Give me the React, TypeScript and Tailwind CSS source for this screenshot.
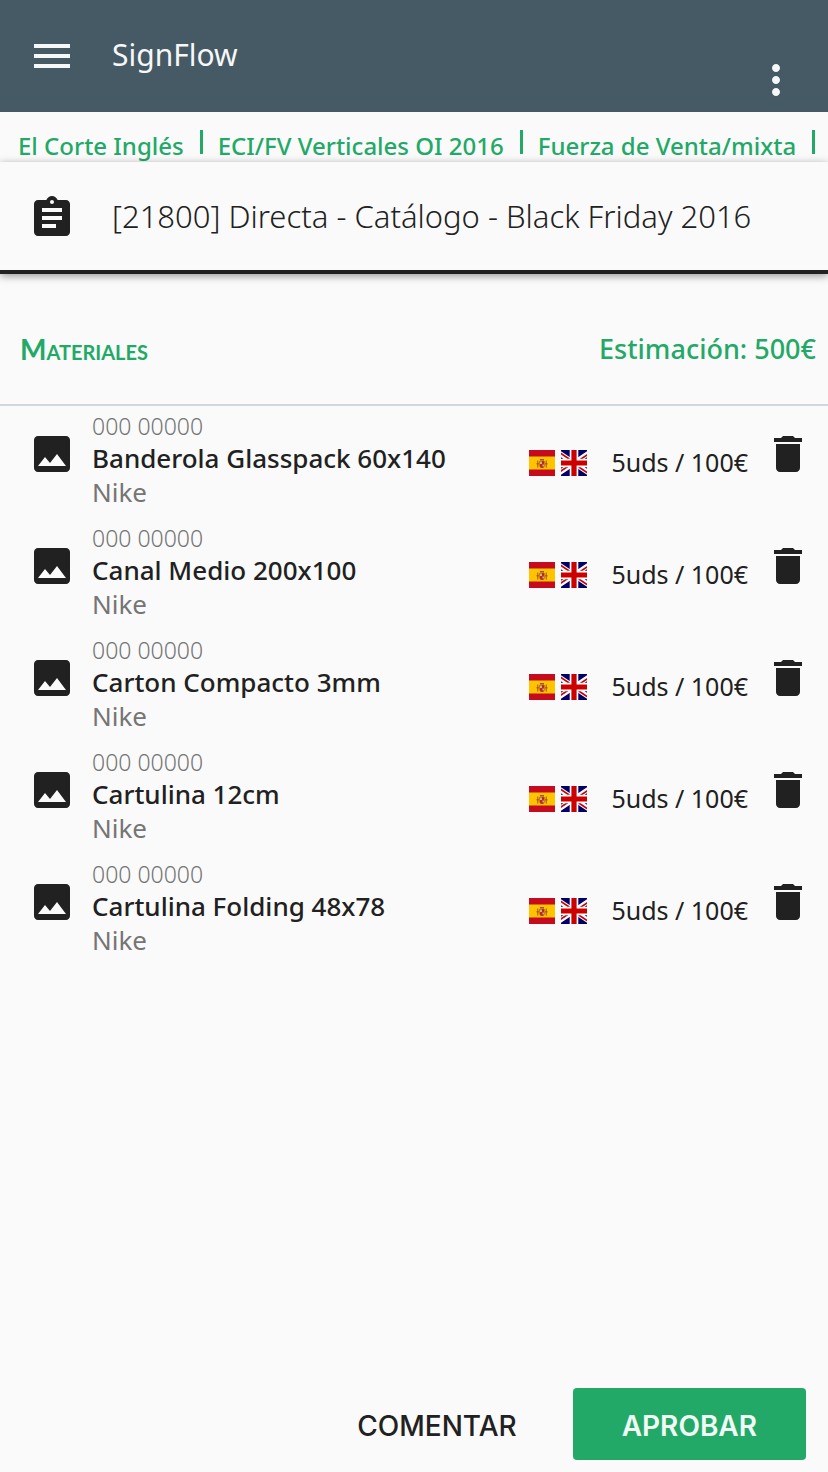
import React from "react";
import { MdAssignment, MdDelete, MdImage, MdMenu, MdMoreVert } from "react-icons/md";

const crumbs = ["El Corte Inglés", "ECI/FV Verticales OI 2016", "Fuerza de Venta/mixta"];

const materials = [
  "Banderola Glasspack 60x140",
  "Canal Medio 200x100",
  "Carton Compacto 3mm",
  "Cartulina 12cm",
  "Cartulina Folding 48x78",
];

function SpainFlag() {
  return (
    <svg viewBox="0 0 26 26" className="size-[26px]" role="img" aria-label="Español">
      <path fill="#c60b1e" d="M0 0h26v26H0z" />
      <path fill="#ffc400" d="M0 6.5h26v13H0z" />
      <path fill="#ad1519" d="M10.5 11h5v4.500q0 2.500-2.500 2.500t-2.500-2.500z" opacity=".85" />
      <path fill="#c8b1a0" d="M11 11.500h2v2.500h-2zM13.500 14.500h1.500v2h-1.500z" />
      <path fill="#8c5a1c" d="M11 9h4v1.500h-4zM8.300 10.500h1v7h-1zM16.700 10.500h1v7h-1z" />
      <path fill="#c0392b" opacity=".7" d="M7.500 13h2.500v1.500H7.500zM16 13h2.500v1.500H16z" />
    </svg>
  );
}

function BritainFlag() {
  return (
    <svg viewBox="0 0 26 26" className="size-[26px]" role="img" aria-label="English">
      <path fill="#006" d="M0 0h26v26H0z" />
      <path stroke="#fff" strokeWidth="5" d="M-6.500 0l39 26M32.500 0l-39 26" />
      <path stroke="#c00" strokeWidth="1.800" d="M-6.500 -.8L13 12.200M32.500 26.800L13 13.800M33.500 0L13 13.700M-7.500 26L13 12.300" />
      <path fill="#fff" d="M8.700 0h8.600v26H8.700zM0 8.700h26v8.600H0z" />
      <path fill="#c00" d="M10.400 0h5.200v26h-5.200zM0 10.400h26v5.200H0z" />
    </svg>
  );
}

export default function App() {
  return (
    <div className="flex min-h-screen flex-col bg-[#fafafa] font-['Noto_Sans','Open_Sans',sans-serif] text-[#212121]">
      <header className="flex h-28 items-center bg-[#455a64] px-7 text-[#f5f7f8]">
        <button type="button" aria-label="Menú">
          <MdMenu className="size-12" />
        </button>
        <h1 className="ml-9 flex-1 pb-0.5 text-[30px] leading-10">SignFlow</h1>
        <button type="button" aria-label="Más opciones" className="mt-12">
          <MdMoreVert className="size-12" />
        </button>
      </header>

      <nav aria-label="Ruta" className="h-[50px] overflow-hidden pt-4 pl-[18px]">
        <ol className="flex gap-[15px] text-2xl leading-9 font-medium whitespace-nowrap text-[#22a968]">
          {crumbs.map((crumb) => (
            <li key={crumb} className="flex items-start gap-4">
              <a href="#" className="leading-9">{crumb}</a>
              <span className="mt-0.5 h-6 w-[3px] bg-[#22a968]" />
            </li>
          ))}
        </ol>
      </nav>

      <section className="flex h-28 items-center border-b-4 border-[#212121] px-7 pt-1 shadow-[0_2px_8px_rgba(0,0,0,0.4)]">
        <MdAssignment className="size-12" />
        <h2 className="ml-9 pb-1 text-[31px] leading-10 font-light">
          [21800] Directa - Catálogo - Black Friday 2016
        </h2>
      </section>

      <main className="flex-1">
        <div className="flex h-[132px] items-center justify-between border-b-2 border-[#cfd8dc] pt-5 pr-3 pl-5 text-[#22a968]">
          <h3 className="font-[Lato,sans-serif] text-[28px] leading-10 font-bold [font-variant:small-caps]">Materiales</h3>
          <p className="text-[27px] leading-10 font-medium">Estimación: 500€</p>
        </div>
        <ul>
          {materials.map((name) => (
            <li key={name} className="flex h-28 items-start pr-4 pl-7">
              <MdImage className="mt-6 size-12" />
              <div className="ml-4 flex-1 pt-1">
                <p className="text-[23px] leading-8 font-light text-[#757575]">000 00000</p>
                <p className="text-[26px] leading-8 font-medium">{name}</p>
                <p className="text-[26px] leading-9 text-[#757575]">Nike</p>
              </div>
              <div className="mt-11 flex gap-1.5">
                <SpainFlag />
                <BritainFlag />
              </div>
              <p className="mt-[38px] ml-6 text-[25px] leading-9">5uds / 100€</p>
              <button type="button" aria-label={`Eliminar ${name}`} className="mt-6 ml-4">
                <MdDelete className="size-12" />
              </button>
            </li>
          ))}
        </ul>
      </main>

      <footer className="flex items-center justify-end gap-3 pt-3 pr-[22px] pb-3 font-[Inter,sans-serif] text-[28px] leading-9 font-medium">
        <button type="button" className="h-[72px] px-11 pt-1">COMENTAR</button>
        <button type="button" className="h-[72px] rounded bg-[#22a968] px-[49px] pt-1 font-semibold text-[#f1faf5]">APROBAR</button>
      </footer>
    </div>
  );
}
